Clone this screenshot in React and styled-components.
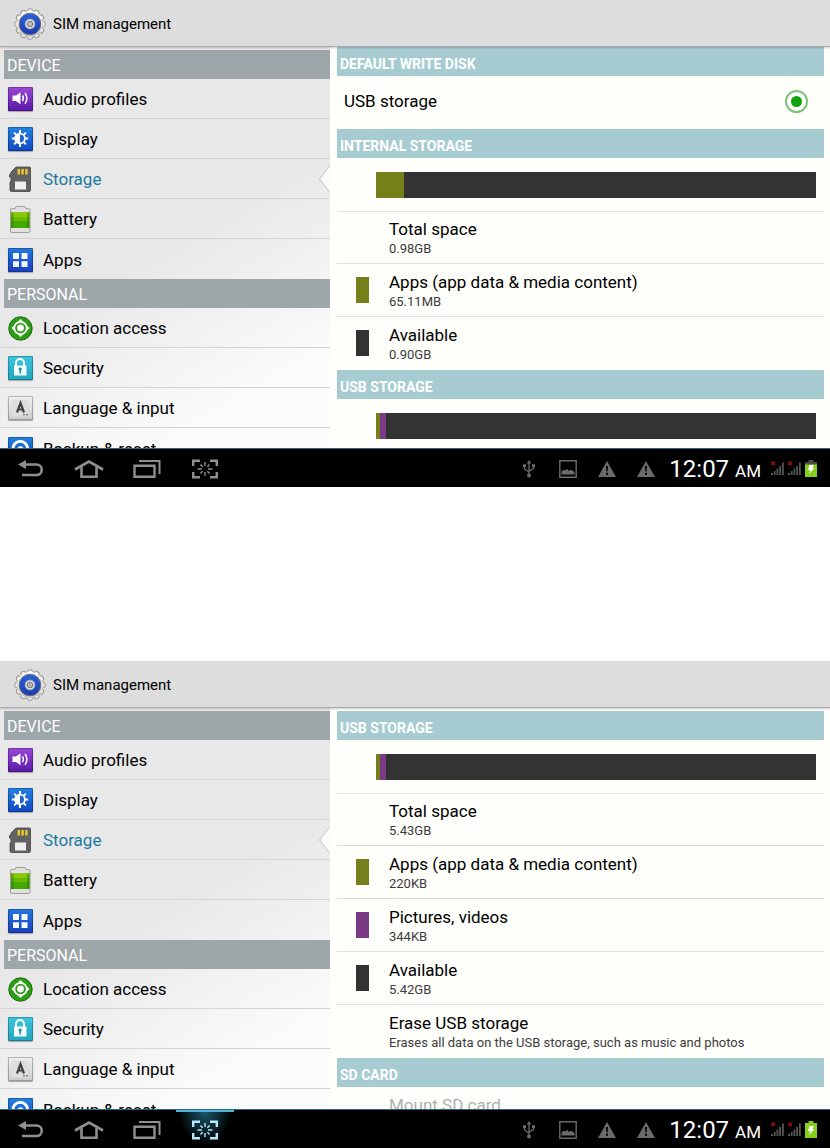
import React, { useState } from "react"
import styled, { createGlobalStyle, css } from "styled-components"

const colors = {
  olive: "#76801a",
  purple: "#7a3a86",
  dark: "#333333",
}

const deviceItems = [
  { icon: "audio", label: "Audio profiles" },
  { icon: "display", label: "Display" },
  { icon: "storage", label: "Storage" },
  { icon: "battery", label: "Battery" },
  { icon: "apps", label: "Apps" },
]

const personalItems = [
  { icon: "location", label: "Location access" },
  { icon: "security", label: "Security" },
  { icon: "language", label: "Language & input" },
  { icon: "backup", label: "Backup & reset" },
]

const usbSegments = [
  { color: colors.olive, share: 1 },
  { color: colors.purple, share: 1.2 },
]

const App = () => (
  <>
    <GlobalStyle />
    <Page>
      <SettingsScreen id="top">
        <SectionTitle>DEFAULT WRITE DISK</SectionTitle>
        <WriteDiskOption />
        <SectionTitle>INTERNAL STORAGE</SectionTitle>
        <UsageBar segments={[{ color: colors.olive, share: 6.4 }]} />
        <StorageRow title="Total space" detail="0.98GB" />
        <StorageRow
          title="Apps (app data & media content)"
          detail="65.11MB"
          color={colors.olive}
        />
        <StorageRow title="Available" detail="0.90GB" color={colors.dark} last />
        <SectionTitle>USB STORAGE</SectionTitle>
        <UsageBar segments={usbSegments} />
      </SettingsScreen>
      <SettingsScreen id="bottom" inset capturing charged>
        <SectionTitle>USB STORAGE</SectionTitle>
        <UsageBar segments={usbSegments} />
        <StorageRow title="Total space" detail="5.43GB" />
        <StorageRow
          title="Apps (app data & media content)"
          detail="220KB"
          color={colors.olive}
        />
        <StorageRow title="Pictures, videos" detail="344KB" color={colors.purple} />
        <StorageRow title="Available" detail="5.42GB" color={colors.dark} />
        <StorageRow
          title="Erase USB storage"
          detail="Erases all data on the USB storage, such as music and photos"
          last
        />
        <SectionTitle>SD CARD</SectionTitle>
        <StorageRow title="Mount SD card" disabled />
      </SettingsScreen>
    </Page>
  </>
)

const SettingsScreen = ({ id, inset, capturing, charged, children }) => (
  <Screen>
    <TitleBar>
      <GearIcon id={id} />
      <Title>SIM management</Title>
    </TitleBar>
    <Body>
      <Sidebar>
        <Group title="DEVICE" items={deviceItems} />
        <Group title="PERSONAL" items={personalItems} />
      </Sidebar>
      <Content $inset={inset}>{children}</Content>
    </Body>
    <SystemBar capturing={capturing} charged={charged} />
  </Screen>
)

const Group = ({ title, items }) => (
  <section>
    <GroupTitle>{title}</GroupTitle>
    <Menu>
      {items.map(({ icon, label }) => (
        <MenuItem key={label}>
          <MenuLink href={`#${icon}`} $active={icon === "storage"}>
            <MenuIcon name={icon} />
            {label}
          </MenuLink>
          {icon === "storage" && <Notch />}
        </MenuItem>
      ))}
    </Menu>
  </section>
)

const WriteDiskOption = () => {
  const [checked, setChecked] = useState(true)

  return (
    <Option>
      USB storage
      <Radio
        type="radio"
        name="disk"
        checked={checked}
        onChange={() => setChecked(true)}
      />
    </Option>
  )
}

const UsageBar = ({ segments }) => (
  <BarRow>
    <Bar>
      {segments.map(({ color, share }) => (
        <Segment key={color} style={{ width: `${share}%`, background: color }} />
      ))}
    </Bar>
  </BarRow>
)

const StorageRow = ({ title, detail, color, disabled, last }) => (
  <Row $last={last}>
    <Swatch $color={color} />
    <RowText>
      <RowTitle $disabled={disabled}>{title}</RowTitle>
      <RowDetail>{detail}</RowDetail>
    </RowText>
  </Row>
)

const SystemBar = ({ capturing, charged }) => (
  <Nav>
    <NavButtons>
      <NavButton aria-label="Back">
        <svg width="26" height="20" viewBox="0 0 26 20" fill="none">
          <path d="M6 5.5H18.5a5.2 5.2 0 0 1 0 10.5H4" stroke="currentColor" strokeWidth="2.6" />
          <path d="M0 5.5 8 1v9z" fill="currentColor" />
        </svg>
      </NavButton>
      <NavButton aria-label="Home">
        <svg width="30" height="20" viewBox="0 0 30 20" fill="none" stroke="currentColor" strokeWidth="2.6">
          <path d="M1 10.5 15 2.5 29 10.5" />
          <path d="M7.5 8V17.8H22.5V8" />
        </svg>
      </NavButton>
      <NavButton aria-label="Recent apps">
        <svg width="28" height="20" viewBox="0 0 28 20" fill="none" stroke="currentColor" strokeWidth="2.4">
          <path d="M1.5 6.8H21.5V17.8H1.5z" />
          <path d="M6 2H26.5V15" strokeWidth="2" />
        </svg>
      </NavButton>
      <NavButton aria-label="Screenshot" $active={capturing}>
        <svg width="26" height="20" viewBox="0 0 26 20" fill="none" stroke="currentColor" strokeWidth="2.4">
          <path d="M1.2 7V1.7H8M18 1.7H24.8V7M24.8 13V18.3H18M8 18.3H1.2V13" />
          <path
            d="M13 3V7M13 13V17M5.5 10H10M16 10H20.5M8.5 5.5 10.6 7.8M17.5 5.5 15.4 7.8M8.5 14.5 10.6 12.2M17.5 14.5 15.4 12.2"
            strokeWidth="1.4"
          />
        </svg>
      </NavButton>
    </NavButtons>
    <Status>
      <StatusIcon>
        <svg width="12" height="18" viewBox="0 0 12 18" fill="none" stroke="currentColor" strokeWidth="1.3">
          <path d="M6 2V15M1.5 5.5V9L6 12M10.5 5.5V8.5L6 11" />
          <path d="M6 0 8.3 3.5H3.7z" fill="currentColor" stroke="none" />
          <circle cx="6" cy="15.6" r="2" fill="currentColor" stroke="none" />
          <path d="M0 4.3H3V7H0zM9 4.3H12V7H9z" fill="currentColor" stroke="none" />
        </svg>
      </StatusIcon>
      <StatusIcon>
        <svg width="18" height="18" viewBox="0 0 18 18">
          <path d="M.8.8H17.2V17.2H.8z" fill="none" stroke="currentColor" strokeWidth="1.4" />
          <path d="M2.5 14.5V11.8L4.5 9.8 6.5 10.5 8 8.8 10 11 12 9.8 15.5 12V14.5z" fill="currentColor" />
        </svg>
      </StatusIcon>
      <StatusIcon>
        <WarningIcon />
      </StatusIcon>
      <StatusIcon>
        <WarningIcon />
      </StatusIcon>
      <Clock>
        12:07 <Meridiem>AM</Meridiem>
      </Clock>
      <Indicators>
        <SignalIcon />
        <SignalIcon />
        <svg width="12" height="17" viewBox="0 0 12 17">
          <path d="M3.5 0H8.5V2H12V17H0V2H3.5z" fill={charged ? "#84cf1b" : "#4a4d48"} />
          <path d="M0 4.5H12V17H0z" fill="#84cf1b" />
          <path d="M4.5 5H9L7.5 8.2H9.3L4 14 5.3 10H3z" fill="#fff" />
        </svg>
      </Indicators>
    </Status>
  </Nav>
)

const WarningIcon = () => (
  <svg width="18" height="16" viewBox="0 0 18 16">
    <path d="M9 0 18 16H0z" fill="currentColor" />
    <path d="M8 5H10L9.6 10.5H8.4zM8 11.8H10V13.7H8z" fill="#000" />
  </svg>
)

const SignalIcon = () => (
  <svg width="13" height="14" viewBox="0 0 13 14">
    <path d="M0 12H2V14H0zM2.8 10H4.6V14H2.8zM5.5 7.5H7.3V14H5.5zM8.2 5H10V14H8.2zM11 1.5H12.8V14H11z" fill="#555" />
    <path d="M.5.8 3.8 4M3.8.8.5 4" stroke="#a80f14" strokeWidth="1.4" />
  </svg>
)

const GearIcon = ({ id }) => (
  <svg width="32" height="32" viewBox="-16 -16 32 32" aria-hidden="true">
    <defs>
      <linearGradient id={`steel-${id}`} x1="0" y1="0" x2="0" y2="1">
        <stop offset="0" stopColor="#ffffff" />
        <stop offset="1" stopColor="#c9c5c0" />
      </linearGradient>
      <linearGradient id={`blue-${id}`} x1="0" y1="0" x2="0" y2="1">
        <stop offset="0" stopColor="#2b62da" />
        <stop offset="1" stopColor="#1c3cae" />
      </linearGradient>
    </defs>
    <g fill="#f0eeec" stroke="#8d8a86" strokeWidth="0.9">
      {[0, 30, 60, 90, 120, 150].map((angle) => (
        <rect
          key={angle}
          x="-2.6"
          y="-15.2"
          width="5.2"
          height="30.4"
          rx="1.8"
          transform={`rotate(${angle})`}
        />
      ))}
    </g>
    <circle r="13" fill={`url(#steel-${id})`} />
    <circle r="10.8" fill={`url(#blue-${id})`} stroke="#6f7078" strokeWidth="1" />
    <circle r="5" fill="#e6e3e0" stroke="#8f97ad" strokeWidth="0.8" />
    <circle r="2.8" fill="#bdb9b6" stroke="#77757a" strokeWidth="1" />
  </svg>
)

const tiles = {
  audio: ["#9a47d6", "#5a1aa8"],
  display: ["#2382e0", "#1247c4"],
  apps: ["#2278dc", "#1a3fc0"],
  security: ["#3cc6dd", "#20a6bf"],
  language: ["#f1f1f1", "#cbcbcb"],
  backup: ["#2382e0", "#1247c4"],
}

const glyphs = {
  audio: (
    <>
      <path d="M4.5 8.5H8L12.5 5.3V17.2L8 14H4.5z" fill="#fff" />
      <path d="M14.5 8.5Q16.2 11.3 14.5 14.2M17 6Q20.8 11.3 17 16.7" fill="none" stroke="#fff" strokeWidth="1.5" />
    </>
  ),
  display: (
    <>
      <path d="M12 3V20M3.8 11.5H20.2M6.1 5.6 17.9 17.4M17.9 5.6 6.1 17.4" stroke="#fff" strokeWidth="2" />
      <circle cx="12" cy="11.5" r="5.8" fill="#fff" />
      <path d="M12 7.5A4 4 0 0 1 12 15.5z" fill="#1f62d3" />
    </>
  ),
  apps: <path d="M5 5H11V11H5zM13.5 5H19.5V11H13.5zM5 13.2H11V19H5zM13.5 13.2H19.5V19H13.5z" fill="#f6f9ff" />,
  security: (
    <>
      <path d="M8 10V7a4 4 0 0 1 8 0V10" fill="none" stroke="#fff" strokeWidth="2" />
      <rect x="6" y="9.5" width="12.5" height="10" fill="#f3ffff" />
      <path d="M12.2 11.5a1.6 1.6 0 0 1 .8 3V17.5H11.4V14.5a1.6 1.6 0 0 1 .8-3z" fill="#2a8ea2" />
    </>
  ),
  language: (
    <>
      <path d="M3.5 3.5H20.5V20.5H3.5z" fill="#dedede" />
      <path d="M9 16.5 12.5 7 16 16.5M10.2 13.5H14.8" fill="none" stroke="#444" strokeWidth="2.2" />
      <path d="M15 18.8H17M18 18.8H20" stroke="#555" />
    </>
  ),
  backup: (
    <>
      <path d="M5.5 14A7.2 7.2 0 1 1 19 14" fill="none" stroke="#fff" strokeWidth="2.8" />
      <path d="M10.5 12.5a2 2 0 1 1 2.5 2" fill="none" stroke="#fff" strokeWidth="2.6" />
      <path d="M2 12H8L5 17z" fill="#fff" />
    </>
  ),
}

const MenuIcon = ({ name }) => {
  if (name === "storage") {
    return (
      <svg width="25" height="26" viewBox="0 0 25 26" aria-hidden="true">
        <path d="M8 1H21.5Q22.5 1 22.5 2V24Q22.5 25.5 21 25.5H3.5Q2 25.5 2 24V16L3 15V12L1.5 11V8.5L3 7.5V6z" fill="#626262" stroke="#444" strokeWidth="0.8" />
        <path d="M10.8 3V8.5M14.6 3V8.5M18.4 3V8.5" stroke="#eac52e" strokeWidth="2.5" />
        <path d="M7 15.5H18V23.5H7z" fill="#efefef" />
      </svg>
    )
  }

  if (name === "battery") {
    return (
      <svg width="25" height="27" viewBox="0 0 25 27" aria-hidden="true">
        <path d="M8 .5H17L18 2.5H20.5Q22 2.5 22 4V25Q22 26.5 20.5 26.5H4Q2.5 26.5 2.5 25V4Q2.5 2.5 4 2.5H7z" fill="#e0e0e0" stroke="#8c8c8c" strokeWidth="0.8" />
        <path d="M3 6.5H21.5V22H3z" fill="#45a800" />
        <path d="M3 6.5H21.5V11H3z" fill="#8ac800" />
        <path d="M3 11H21.5V15H3z" fill="#66b800" />
        <path d="M3 6.5H5.5V22H3zM19 6.5H21.5V22H19z" fill="#1d6e00" opacity="0.4" />
      </svg>
    )
  }

  if (name === "location") {
    return (
      <svg width="25" height="25" viewBox="0 0 25 25" aria-hidden="true">
        <circle cx="12.5" cy="12.5" r="11.7" fill="#2d9c16" stroke="#1c6a10" />
        <circle cx="12.5" cy="12" r="6.2" fill="none" stroke="#fff" strokeWidth="1.7" />
        <circle cx="12.5" cy="12" r="3.4" fill="#fff" />
        <path d="M10 5.5 12.5 3 15 5.5zM10 18.5 12.5 21 15 18.5zM6 9.5 3.5 12 6 14.5zM19 9.5 21.5 12 19 14.5z" fill="#fff" />
      </svg>
    )
  }

  const [from, to] = tiles[name]

  return (
    <Tile $from={from} $to={to}>
      <svg width="25" height="24" viewBox="0 0 25 24" aria-hidden="true">
        {glyphs[name]}
      </svg>
    </Tile>
  )
}

const GlobalStyle = createGlobalStyle`
  * {
    box-sizing: border-box;
  }

  body {
    margin: 0;
    background: #fff;
    color: #000;
    font-family: Roboto, "Liberation Sans", sans-serif;
  }
`

const Page = styled.main`
  display: flex;
  flex-direction: column;
  gap: 174px;
`

const Screen = styled.article`
  display: flex;
  flex-direction: column;
`

const TitleBar = styled.header`
  position: relative;
  z-index: 1;
  display: flex;
  align-items: center;
  gap: 7px;
  height: 47px;
  padding: 2px 0 0 14px;
  background: #dddddd;
  border-bottom: 1px solid #a9a9a9;
  box-shadow: 0 1px 2px rgba(0, 0, 0, 0.2);
`

const Title = styled.h1`
  margin: 0;
  font-size: 15px;
  font-weight: 400;
`

const Body = styled.div`
  display: grid;
  grid-template-columns: 330px 1fr;
  height: 401px;
  overflow: hidden;
`

const Sidebar = styled.nav`
  height: 401px;
  padding-top: 3px;
  overflow: hidden;
  background: linear-gradient(150deg, #e8e8e8 50%, #fcfcfc 85%);
`

const GroupTitle = styled.h2`
  height: 29px;
  margin: 0 0 0 4px;
  padding-left: 3px;
  background: #9da6a9;
  color: #fff;
  font-size: 16px;
  font-weight: 400;
  line-height: 32px;
`

const Menu = styled.ul`
  margin: 0;
  padding: 0;
  list-style: none;
`

const MenuItem = styled.li`
  position: relative;
  height: 40px;
  border-bottom: 1px solid #d4d4d4;

  &:last-child {
    border-bottom: 0;
  }
`

const MenuLink = styled.a`
  display: flex;
  align-items: center;
  gap: 10px;
  height: 100%;
  padding: 1px 0 0 8px;
  color: ${({ $active }) => ($active ? "#1b7a9e" : "#000")};
  font-size: 17px;
  text-decoration: none;
`

const Tile = styled.span`
  display: flex;
  width: 25px;
  height: 24px;
  background: linear-gradient(${({ $from, $to }) => `${$from}, ${$to}`});
  border-radius: 1px;
  box-shadow: inset 0 0 0 1px rgba(0, 0, 0, 0.25), 0 1px 1px rgba(0, 0, 0, 0.3);
`

/* arrow cut into the right edge of the selected entry */
const Notch = styled.span`
  position: absolute;
  top: 6px;
  right: 0;
  width: 11px;
  height: 28px;
  background: #bdbdbd;
  clip-path: polygon(100% 0, 0 50%, 100% 100%);

  &::after {
    content: "";
    position: absolute;
    inset: 1px 0 1px 1px;
    background: #fbfbfb;
    clip-path: polygon(100% 0, 0 50%, 100% 100%);
  }
`

const Content = styled.div`
  height: 401px;
  padding: ${({ $inset }) => ($inset ? 3 : 0)}px 6px 0 7px;
  overflow: hidden;
  background: #fefefa;
`

const SectionTitle = styled.h2`
  height: 29px;
  margin: 0;
  padding-left: 3px;
  background: #a6ccd2;
  color: #fff;
  font-size: 14px;
  font-weight: 700;
  line-height: 34px;
`

const Option = styled.label`
  display: flex;
  align-items: center;
  justify-content: space-between;
  height: 53px;
  padding: 0 16px 3px 7px;
  font-size: 17px;
`

const Radio = styled.input`
  display: grid;
  place-items: center;
  width: 23px;
  height: 23px;
  margin: 0;
  appearance: none;
  border: 2px solid #7cc47c;
  border-radius: 50%;

  &:checked::before {
    content: "";
    width: 11px;
    height: 11px;
    border-radius: 50%;
    background: #0fa30f;
  }
`

const BarRow = styled.div`
  height: 54px;
  margin-bottom: -1px;
  padding: 14px 8px 0 39px;
  border-bottom: 1px solid #e2e2df;
`

const Bar = styled.div`
  display: flex;
  height: 26px;
  background: ${colors.dark};
`

const Segment = styled.div`
  height: 100%;
`

const Row = styled.div`
  display: flex;
  align-items: center;
  gap: 20px;
  height: 53px;
  padding-left: 19px;
  border-bottom: 1px solid ${({ $last }) => ($last ? "transparent" : "#dededb")};
`

const Swatch = styled.span`
  width: 13px;
  height: 26px;
  background: ${({ $color }) => $color || "transparent"};
`

const RowText = styled.div`
  padding-top: 2px;
`

const RowTitle = styled.div`
  color: ${({ $disabled }) => ($disabled ? "#b0b0ae" : "#000")};
  font-size: 17px;
  line-height: 22px;
`

const RowDetail = styled.div`
  min-height: 18px;
  color: #3c3c3c;
  font-size: 13px;
  line-height: 18px;
`

const Nav = styled.footer`
  display: flex;
  justify-content: space-between;
  height: 39px;
  background: #000;
  border-top: 1px solid #2b6a80;
`

const NavButtons = styled.div`
  display: flex;
  padding-left: 2px;
`

const NavButton = styled.button`
  display: flex;
  align-items: center;
  justify-content: center;
  width: 58px;
  padding: 2px 0 0;
  border: 0;
  background: none;
  color: #8f8f8f;

  ${({ $active }) =>
    $active &&
    css`
      background: radial-gradient(ellipse at 50% 0, #1d5a70, transparent 65%);
      box-shadow: inset 0 2px #4fb4d8;
      color: #b5e8fb;
    `}
`

const Status = styled.div`
  display: flex;
  align-items: center;
  padding-right: 13px;
`

const StatusIcon = styled.span`
  display: flex;
  justify-content: center;
  width: 39px;
  padding-top: 2px;
  color: #6b6b6b;
`

const Clock = styled.time`
  margin: 0 10px 0 4px;
  padding-top: 4px;
  color: #fff;
  font-size: 24px;
  line-height: 34px;
`

const Meridiem = styled.small`
  font-size: 17px;
`

const Indicators = styled.span`
  display: flex;
  align-items: center;
  gap: 4px;
`

export default App
